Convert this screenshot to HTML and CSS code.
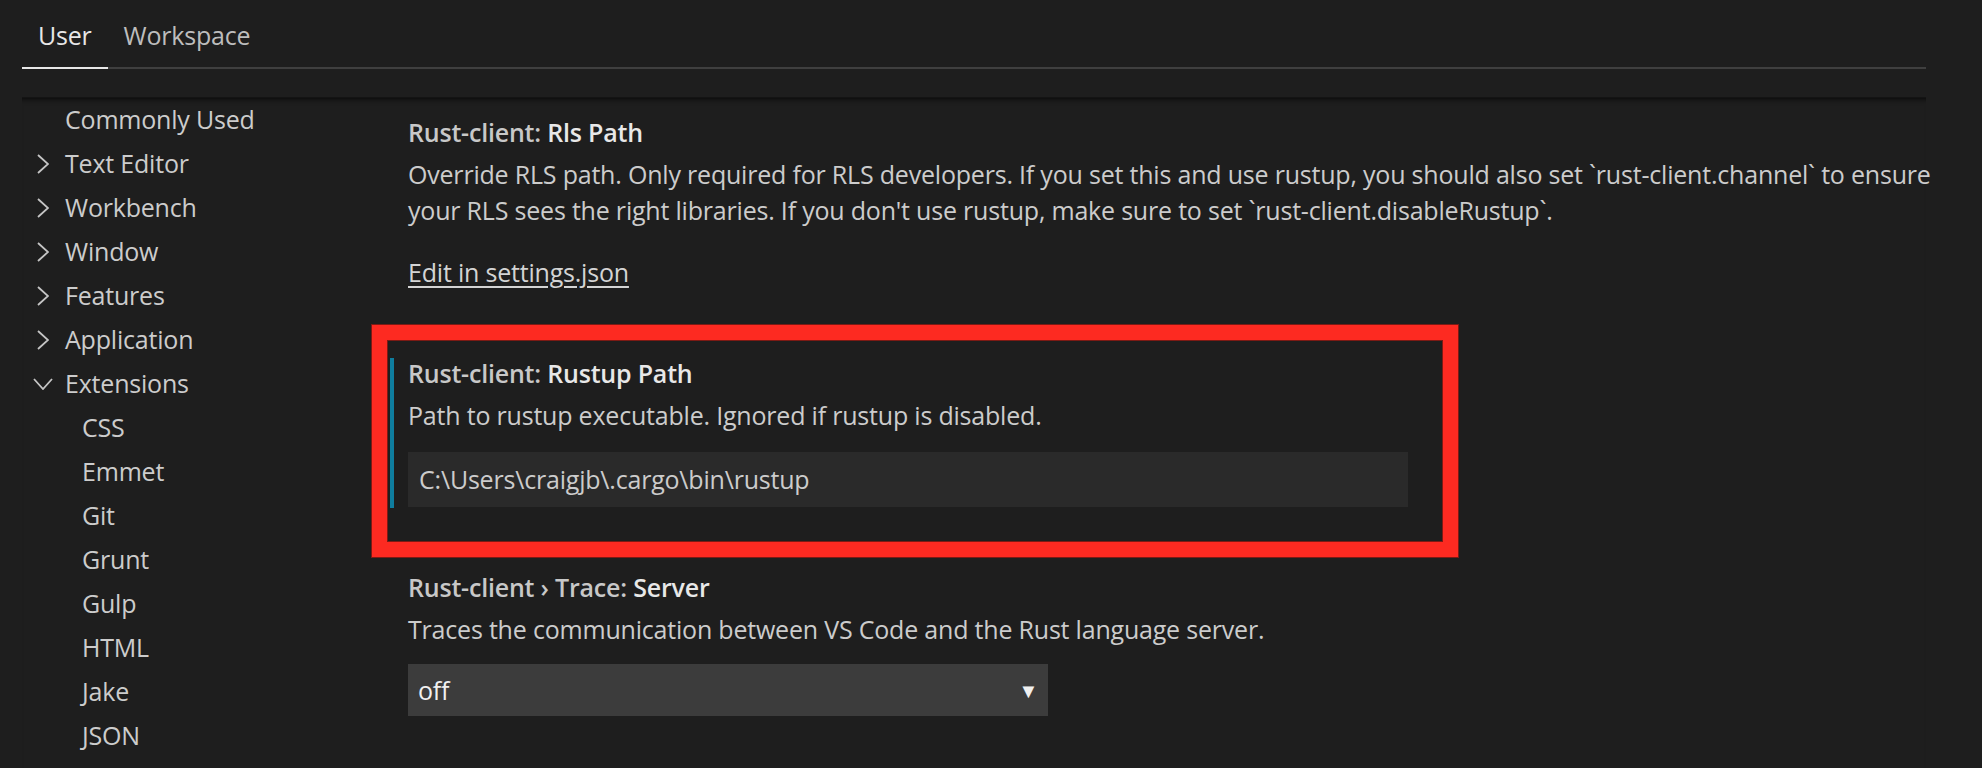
FILE: index.html
```html
<!DOCTYPE html>
<html>
<head>
<meta charset="utf-8">
<link rel="stylesheet" href="styles.css">
</head>
<body>
<div class="page">
  <div class="tabs">
    <div class="tab active">User</div>
    <div class="tab">Workspace</div>
  </div>
  <div class="body">
    <nav class="sidebar">
      <div class="row lvl1">Commonly Used</div>
      <div class="row lvl1"><svg class="chev" viewBox="0 0 12 20"><path d="M1 1 L11 10 L1 19"/></svg>Text Editor</div>
      <div class="row lvl1"><svg class="chev" viewBox="0 0 12 20"><path d="M1 1 L11 10 L1 19"/></svg>Workbench</div>
      <div class="row lvl1"><svg class="chev" viewBox="0 0 12 20"><path d="M1 1 L11 10 L1 19"/></svg>Window</div>
      <div class="row lvl1"><svg class="chev" viewBox="0 0 12 20"><path d="M1 1 L11 10 L1 19"/></svg>Features</div>
      <div class="row lvl1"><svg class="chev" viewBox="0 0 12 20"><path d="M1 1 L11 10 L1 19"/></svg>Application</div>
      <div class="row lvl1"><svg class="chevd" viewBox="0 0 20 12"><path d="M1 1 L10 11 L19 1"/></svg>Extensions</div>
      <div class="row lvl2">CSS</div>
      <div class="row lvl2">Emmet</div>
      <div class="row lvl2">Git</div>
      <div class="row lvl2">Grunt</div>
      <div class="row lvl2">Gulp</div>
      <div class="row lvl2">HTML</div>
      <div class="row lvl2">Jake</div>
      <div class="row lvl2">JSON</div>
    </nav>
    <main class="main">
      <section class="setting first">
        <div class="title"><span class="cat">Rust-client: </span><span class="label">Rls Path</span></div>
        <div class="desc">Override RLS path. Only required for RLS developers. If you set this and use rustup, you should also set `rust-client.channel` to ensure<br>your RLS sees the right libraries. If you don't use rustup, make sure to set `rust-client.disableRustup`.</div>
        <a class="link">Edit in settings.json</a>
      </section>
      <section class="setting modified">
        <div class="highlight"></div>
        <div class="title"><span class="cat">Rust-client: </span><span class="label">Rustup Path</span></div>
        <div class="desc">Path to rustup executable. Ignored if rustup is disabled.</div>
        <div class="input">C:\Users\craigjb\.cargo\bin\rustup</div>
      </section>
      <section class="setting">
        <div class="title"><span class="cat">Rust-client › Trace: </span><span class="label">Server</span></div>
        <div class="desc">Traces the communication between VS Code and the Rust language server.</div>
        <div class="select"><span>off</span><span class="arrow">▼</span></div>
      </section>
    </main>
  </div>
</div>
</body>
</html>
```

FILE: styles.css
```css
html, body {
  margin: 0;
  padding: 0;
  background: #1e1e1e;
  height: 100%;
  overflow: hidden;
}
body {
  font-family: "Open Sans", "Noto Sans", sans-serif;
  font-size: 25px;
  letter-spacing: -0.2px;
  color: #cccccc;
}
.page {
  margin-left: 22px;
  width: 1904px;
}
.tabs {
  display: flex;
  height: 67px;
  border-bottom: 2px solid #3f3f3f;
  box-sizing: content-box;
}
.tab {
  padding: 0 16px;
  height: 67px;
  line-height: 70px;
  color: #bdbdbd;
}
.tab.active {
  color: #e7e7e7;
  border-bottom: 2px solid #e7e7e7;
}
.body {
  display: flex;
  margin-top: 28px;
  box-shadow: inset 0 6px 6px -6px #000;
  border-top: 1px solid #141414;
  padding-top: 0;
  height: 700px;
}
.sidebar {
  width: 346px;
  flex: none;
  margin-top: -1px;
}
.row {
  height: 44px;
  line-height: 44px;
  display: flex;
  align-items: center;
  white-space: nowrap;
}
.lvl1 { padding-left: 43px; position: relative; }
.lvl2 { padding-left: 60px; }
.chev {
  position: absolute;
  left: 15px;
  top: 13px;
  width: 12px;
  height: 20px;
}
.chevd {
  position: absolute;
  left: 11px;
  top: 17px;
  width: 20px;
  height: 12px;
}
.chev path, .chevd path {
  fill: none;
  stroke: #c5c5c5;
  stroke-width: 1.8;
}
.main {
  flex: 1;
  padding-top: 19px;
}
.setting {
  position: relative;
  margin-left: 22px;
  border-left: 4px solid transparent;
  padding-left: 14px;
  padding-bottom: 4px;
  margin-bottom: 64px;
}
.setting.modified {
  border-left-color: #0f7d9e;
  padding-bottom: 1px;
}
.title {
  line-height: 30px;
  font-weight: 600;
  white-space: nowrap;
}
.cat { color: #c8c8c8; }
.label { color: #e8e8e8; }
.desc {
  margin-top: 9px;
  line-height: 36px;
  white-space: nowrap;
}
.link {
  display: inline-block;
  margin-top: 26px;
  line-height: 36px;
  color: #d4d4d4;
  text-decoration: underline;
  text-underline-offset: 4px;
}
.input {
  margin-top: 19px;
  width: 1000px;
  height: 55px;
  line-height: 55px;
  background: #2a2a2a;
  padding-left: 11px;
  box-sizing: border-box;
  color: #cccccc;
}
.select {
  margin-top: 17px;
  width: 640px;
  height: 52px;
  background: #3c3c3c;
  display: flex;
  align-items: center;
  justify-content: space-between;
  padding: 0 10px 0 10px;
  box-sizing: border-box;
  color: #f0f0f0;
}
.arrow {
  font-size: 20px;
  color: #f0f0f0;
}
.highlight {
  position: absolute;
  left: -22px;
  top: -33px;
  width: 1086px;
  height: 232px;
  box-sizing: border-box;
  border: 15px solid #fd2a21;
  box-shadow: 0 0 0 1px #7d1a14, inset 0 0 0 1px #7d1a14;
  pointer-events: none;
}
```
